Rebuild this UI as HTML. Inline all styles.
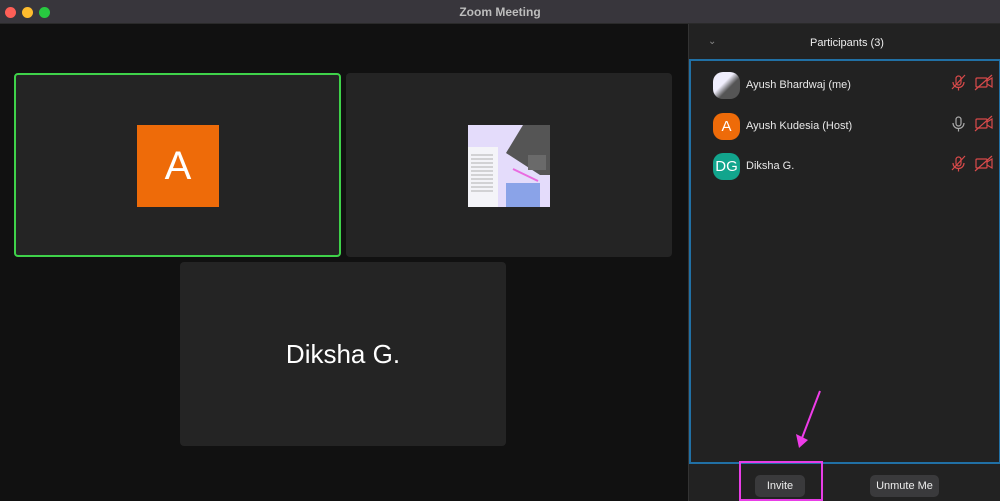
<!DOCTYPE html>
<html><head><style>
*{margin:0;padding:0;box-sizing:border-box}
body{width:1000px;height:501px;background:#111;font-family:"Liberation Sans",sans-serif;position:relative;overflow:hidden;color:#eee}
.a{position:absolute}
.tile{position:absolute;background:#242424;border-radius:4px}
.row{position:absolute;left:713px;height:28px;display:flex;align-items:center;font-size:11px;color:#e8e8e8}
.av{width:27px;height:27px;border-radius:10px;margin-right:6px;display:flex;align-items:center;justify-content:center;color:#fff;font-size:15px}
.btn{position:absolute;background:#3a3a3c;border-radius:5px;font-size:11px;color:#eee;display:flex;align-items:center;justify-content:center;height:22px;top:475px}
</style></head><body>
<div class="a" style="left:0;top:0;width:1000px;height:24px;background:#38363c;border-bottom:1px solid #2a2a2a"></div>
<div class="a" style="left:5px;top:7px;width:11px;height:11px;border-radius:50%;background:#fe5f57"></div>
<div class="a" style="left:22px;top:7px;width:11px;height:11px;border-radius:50%;background:#febc2e"></div>
<div class="a" style="left:39px;top:7px;width:11px;height:11px;border-radius:50%;background:#28c840"></div>
<div class="a" style="left:0;top:5px;width:1000px;text-align:center;font-size:12px;font-weight:bold;color:#bdbdbd">Zoom Meeting</div>

<div class="tile" style="left:14px;top:73px;width:327px;height:184px;border:2px solid #3fd24a"></div>
<div class="a" style="left:137px;top:125px;width:82px;height:82px;background:#ee6b09;color:#fff;font-size:40px;display:flex;align-items:center;justify-content:center">A</div>
<div class="tile" style="left:346px;top:73px;width:326px;height:184px"></div>
<svg class="a" style="left:468px;top:125px" width="82" height="82" viewBox="0 0 82 82">
<rect width="82" height="82" fill="#e4dcfb"/>
<rect x="0" y="22" width="30" height="60" fill="#f4f4f8"/>
<g stroke="#999" stroke-width="0.8"><line x1="3" y1="30" x2="25" y2="30"/><line x1="3" y1="34" x2="25" y2="34"/><line x1="3" y1="38" x2="25" y2="38"/><line x1="3" y1="42" x2="25" y2="42"/><line x1="3" y1="46" x2="25" y2="46"/><line x1="3" y1="50" x2="25" y2="50"/><line x1="3" y1="54" x2="25" y2="54"/><line x1="3" y1="58" x2="25" y2="58"/><line x1="3" y1="62" x2="25" y2="62"/><line x1="3" y1="66" x2="25" y2="66"/></g>
<polygon points="55,0 82,0 82,50 72,50 38,28" fill="#555"/>
<rect x="60" y="30" width="18" height="15" fill="#6a6a6a"/>
<polygon points="38,58 72,58 72,82 38,82" fill="#8aa3e8"/>
<line x1="45" y1="44" x2="70" y2="56" stroke="#e96be0" stroke-width="2"/>
</svg>
<div class="tile" style="left:180px;top:262px;width:326px;height:184px;display:flex;align-items:center;justify-content:center;font-size:26px;color:#fff">Diksha G.</div>

<div class="a" style="left:688px;top:24px;width:312px;height:477px;background:#222;border-left:1px solid #333"></div>
<div class="a" style="left:708px;top:36px;font-size:10px;color:#888">⌄</div>
<div class="a" style="left:688px;top:37px;text-align:center;font-size:11px;color:#eee;width:318px">Participants (3)</div>
<div class="a" style="left:689px;top:59px;width:312px;height:405px;border:2px solid #2170a5"></div>

<div class="row" style="top:71px"><div class="av" style="background:linear-gradient(135deg,#f0eefc 40%,#555 60%)"></div>Ayush Bhardwaj (me)</div>
<div class="row" style="top:112px"><div class="av" style="background:#ee6b09">A</div>Ayush Kudesia (Host)</div>
<div class="row" style="top:152px"><div class="av" style="background:#12a58d">DG</div>Diksha G.</div>

<svg class="a" style="left:950px;top:74px" width="45" height="110" viewBox="0 0 45 110">
<g fill="none" stroke="#d84a4a" stroke-width="1.2">
<rect x="6" y="2" width="5" height="9" rx="2.5"/><path d="M3 8a5.5 5.5 0 0 0 11 0M8.5 13.5v3M2 15L15 1"/>
<rect x="26" y="4" width="11" height="9" rx="1"/><path d="M37 7l5-3v9l-5-3M25 16L42 1"/>
<rect x="26" y="45" width="11" height="9" rx="1"/><path d="M37 48l5-3v9l-5-3M25 57L42 42"/>
<rect x="6" y="83" width="5" height="9" rx="2.5"/><path d="M3 89a5.5 5.5 0 0 0 11 0M8.5 94.5v3M2 96L15 82"/>
<rect x="26" y="85" width="11" height="9" rx="1"/><path d="M37 88l5-3v9l-5-3M25 97L42 82"/>
</g>
<g fill="none" stroke="#aaa" stroke-width="1.2"><rect x="6" y="43" width="5" height="9" rx="2.5"/><path d="M3 49a5.5 5.5 0 0 0 11 0M8.5 54.5v3"/></g>
</svg>

<svg class="a" style="left:790px;top:388px" width="40" height="64"><path d="M30 3L12 50" stroke="#ee3ce8" stroke-width="2"/><polygon points="6,46 18,52 9,60" fill="#ee3ce8"/></svg>
<div class="btn" style="left:755px;width:50px">Invite</div>
<div class="btn" style="left:870px;width:69px">Unmute Me</div>
<div class="a" style="left:739px;top:461px;width:84px;height:40px;border:2px solid #e83ee6"></div>
</body></html>
